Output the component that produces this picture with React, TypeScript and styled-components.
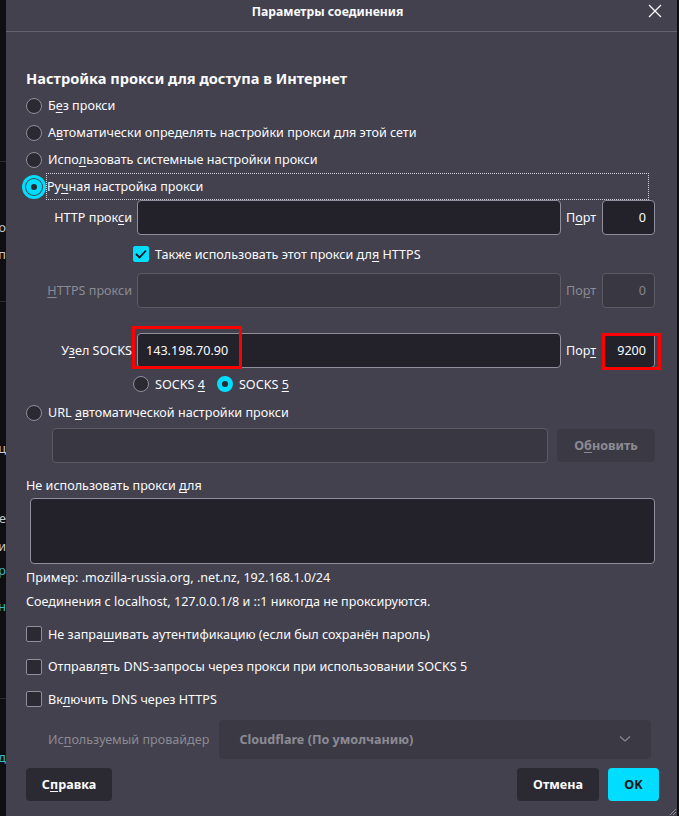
import React from "react";
import styled, { createGlobalStyle, css } from "styled-components";

const Global = createGlobalStyle`
  html, body { margin: 0; padding: 0; background: #0f0f13; }
  body { font-family: "Noto Sans", "Open Sans", sans-serif; font-size: 12.6px; color: #fbfbfe; }
  * { box-sizing: border-box; }
`;

const Root = styled.div`
  display: flex;
  width: 679px;
  height: 816px;
  overflow: hidden;
  background: #0f0f13;
`;

const Backdrop = styled.div`
  width: 6px;
  flex: none;
  position: relative;
  overflow: hidden;
`;

const Frag = styled.div<{ $top: number; $blue?: boolean }>`
  position: absolute;
  right: 0;
  top: ${(p) => p.$top}px;
  font-size: 12.6px;
  line-height: 16px;
  white-space: nowrap;
  color: ${(p) => (p.$blue ? "#3bb8c8" : "#c8c8ce")};
`;

const FragLine = styled.div<{ $top: number }>`
  position: absolute;
  left: 0;
  right: 0;
  top: ${(p) => p.$top}px;
  height: 1px;
  background: #2a2a30;
`;

const Dialog = styled.div`
  flex: 1;
  margin-right: 2px;
  background: #42414d;
  display: flex;
  flex-direction: column;
  position: relative;
`;

const TitleBar = styled.div`
  height: 32px;
  border-bottom: 1px solid #64636c;
  display: flex;
  align-items: center;
  padding-left: 6px;
  padding-right: 10px;
  flex: none;
`;

const Title = styled.div`
  flex: 1;
  text-align: center;
  font-weight: 700;
  font-size: 12.2px;
  padding-bottom: 9px;
`;

const CloseButton = styled.div`
  width: 24px;
  height: 24px;
  display: flex;
  align-items: center;
  justify-content: center;
  margin-bottom: 9px;
`;

const Content = styled.div`
  flex: 1;
  display: flex;
  flex-direction: column;
  padding: 0 22px 0 20px;
`;

const Heading = styled.div`
  margin-top: 36px;
  margin-bottom: 4px;
  font-size: 14.6px;
  font-weight: 700;
  line-height: 20px;
`;

const U = styled.span`
  text-decoration: underline;
  text-underline-offset: 2px;
`;

const RadioRow = styled.div`
  height: 27px;
  display: flex;
  align-items: center;
  gap: 6px;
`;

const RadioCircle = styled.span<{ $checked?: boolean; $focus?: boolean }>`
  width: 16px;
  height: 16px;
  flex: none;
  border-radius: 50%;
  background: #2b2a33;
  border: 1px solid #8f8f9d;
  ${(p) =>
    p.$checked &&
    css`
      border: 5px solid #00ddff;
      background: #2b2a33;
    `}
  ${(p) =>
    p.$focus &&
    css`
      box-shadow: 0 0 0 1px #42414d, 0 0 0 4px #00ddff;
    `}
`;

const FocusLabel = styled.span`
  flex: 1;
  height: 25px;
  display: flex;
  align-items: center;
  margin-left: -1px;
  margin-right: 7px;
  outline: 1px dotted #d0d0d8;
`;

const ProxyRow = styled.div<{ $top?: number }>`
  display: grid;
  grid-template-columns: 106px 1fr 31px 53px;
  column-gap: 5px;
  align-items: center;
  margin-top: ${(p) => p.$top ?? 0}px;
`;

const FieldLabel = styled.span<{ $disabled?: boolean }>`
  text-align: right;
  white-space: nowrap;
  color: ${(p) => (p.$disabled ? "#8c8b94" : "#fbfbfe")};
`;

const PortLabel = styled.span<{ $disabled?: boolean }>`
  color: ${(p) => (p.$disabled ? "#8c8b94" : "#fbfbfe")};
`;

const InputBox = styled.div<{ $disabled?: boolean; $right?: boolean; $h?: number }>`
  position: relative;
  height: ${(p) => p.$h ?? 35}px;
  border-radius: 4px;
  border: 1px solid ${(p) => (p.$disabled ? "#5c5b64" : "#8f8f9d")};
  background: ${(p) => (p.$disabled ? "#393842" : "#23222b")};
  color: ${(p) => (p.$disabled ? "#85848d" : "#fbfbfe")};
  display: flex;
  align-items: center;
  justify-content: ${(p) => (p.$right ? "flex-end" : "flex-start")};
  padding: 0 8px;
`;

const Highlight = styled.div<{ $l: number; $t: number; $w: number; $h: number }>`
  position: absolute;
  left: ${(p) => p.$l}px;
  top: ${(p) => p.$t}px;
  width: ${(p) => p.$w}px;
  height: ${(p) => p.$h}px;
  border: 3px solid #ff0000;
  pointer-events: none;
`;

const CheckRow = styled.div<{ $indent?: number; $h?: number }>`
  height: ${(p) => p.$h ?? 32.5}px;
  display: flex;
  align-items: center;
  gap: 6px;
  padding-left: ${(p) => p.$indent ?? 0}px;
`;

const CheckBox = styled.span<{ $checked?: boolean }>`
  width: 16px;
  height: 16px;
  flex: none;
  border-radius: 2px;
  display: flex;
  align-items: center;
  justify-content: center;
  background: ${(p) => (p.$checked ? "#00ddff" : "#2b2a33")};
  border: 1px solid ${(p) => (p.$checked ? "#00ddff" : "#8f8f9d")};
`;

const SocksRadios = styled.div`
  height: 30px;
  margin-top: 1px;
  display: flex;
  align-items: center;
  padding-left: 107px;
  gap: 12px;
`;

const SocksOption = styled.span`
  display: flex;
  align-items: center;
  gap: 6px;
`;

const UrlRow = styled.div`
  display: flex;
  align-items: center;
  gap: 9px;
  margin-top: 2px;
  padding-left: 26px;
`;

const Grow = styled.div`
  flex: 1;
`;

const GhostButton = styled.div`
  width: 98px;
  height: 33px;
  border-radius: 4px;
  background: #3b3a44;
  color: #8c8b94;
  font-weight: 700;
  display: flex;
  align-items: center;
  justify-content: center;
`;

const SectionLabel = styled.div`
  margin-top: 13px;
  line-height: 20px;
  margin-bottom: 2px;
`;

const TextArea = styled.div`
  margin-left: 4px;
  height: 66px;
  border-radius: 4px;
  border: 1px solid #8f8f9d;
  background: #23222b;
`;

const Note = styled.div<{ $top?: number }>`
  line-height: 24px;
  margin-top: ${(p) => p.$top ?? 0}px;
`;

const ChecksBlock = styled.div`
  margin-top: 4px;
  display: flex;
  flex-direction: column;
`;

const ProviderRow = styled.div`
  margin-top: 4px;
  display: flex;
  align-items: center;
  gap: 10px;
  padding-left: 22px;
  padding-right: 4px;
`;

const ProviderLabel = styled.span`
  color: #8c8b94;
`;

const Select = styled.div`
  flex: 1;
  height: 39px;
  border-radius: 4px;
  background: #3b3a44;
  color: #8c8b94;
  font-weight: 700;
  display: flex;
  align-items: center;
  justify-content: space-between;
  padding: 0 20px 0 20px;
`;

const Footer = styled.div`
  margin-top: 9px;
  margin-right: -4px;
  display: flex;
  align-items: center;
  gap: 9px;
`;

const Button = styled.div<{ $primary?: boolean; $w: number }>`
  width: ${(p) => p.$w}px;
  height: 33px;
  border-radius: 4px;
  font-weight: 700;
  display: flex;
  align-items: center;
  justify-content: center;
  background: ${(p) => (p.$primary ? "#00ddff" : "#2b2a33")};
  color: ${(p) => (p.$primary ? "#15141a" : "#fbfbfe")};
`;

const Grip = styled.svg`
  position: absolute;
  right: 0;
  bottom: 0;
`;

const Check = () => (
  <svg width="12" height="10" viewBox="0 0 12 10">
    <path d="M1 5 L4.5 8.5 L11 1.5" stroke="#15141a" strokeWidth="1.8" fill="none" />
  </svg>
);

export default function App() {
  return (
    <>
      <Global />
      <Root>
        <Backdrop>
          <FragLine $top={161} />
          <Frag $top={220}>о</Frag>
          <Frag $top={247}>п</Frag>
          <FragLine $top={301} />
          <Frag $top={441}>ац</Frag>
          <Frag $top={511}>е</Frag>
          <Frag $top={539}>и</Frag>
          <Frag $top={563} $blue>р</Frag>
          <Frag $top={599} $blue>н</Frag>
          <FragLine $top={698} />
          <Frag $top={750} $blue>д</Frag>
        </Backdrop>
        <Dialog>
          <TitleBar>
            <Title>Параметры соединения</Title>
            <CloseButton>
              <svg width="14" height="14" viewBox="0 0 14 14">
                <path d="M1 1 L13 13 M13 1 L1 13" stroke="#fbfbfe" strokeWidth="1.3" />
              </svg>
            </CloseButton>
          </TitleBar>
          <Content>
            <Heading>Настройка прокси для доступа в Интернет</Heading>
            <RadioRow>
              <RadioCircle />
              <span>
                Б<U>е</U>з прокси
              </span>
            </RadioRow>
            <RadioRow>
              <RadioCircle />
              <span>
                А<U>в</U>томатически определять настройки прокси для этой сети
              </span>
            </RadioRow>
            <RadioRow>
              <RadioCircle />
              <span>
                Испо<U>л</U>ьзовать системные настройки прокси
              </span>
            </RadioRow>
            <RadioRow>
              <RadioCircle $checked $focus />
              <FocusLabel>
                Ру<U>ч</U>ная настройка прокси
              </FocusLabel>
            </RadioRow>

            <ProxyRow>
              <FieldLabel>
                HTTP прок<U>с</U>и
              </FieldLabel>
              <InputBox />
              <PortLabel>
                П<U>о</U>рт
              </PortLabel>
              <InputBox $right>0</InputBox>
            </ProxyRow>
            <CheckRow $indent={107} $h={38}>
              <CheckBox $checked>
                <Check />
              </CheckBox>
              <span>
                Также использовать этот прокси дл<U>я</U> HTTPS
              </span>
            </CheckRow>
            <ProxyRow>
              <FieldLabel $disabled>
                <U>H</U>TTPS прокси
              </FieldLabel>
              <InputBox $disabled />
              <PortLabel $disabled>
                По<U>р</U>т
              </PortLabel>
              <InputBox $disabled $right>
                0
              </InputBox>
            </ProxyRow>
            <ProxyRow $top={25}>
              <FieldLabel>
                У<U>з</U>ел SOCKS
              </FieldLabel>
              <InputBox>
                143.198.70.90
                <Highlight $l={-6} $t={-8} $w={110} $h={43} />
              </InputBox>
              <PortLabel>
                Пор<U>т</U>
              </PortLabel>
              <InputBox $right>
                9200
                <Highlight $l={-1} $t={-1} $w={59} $h={37} />
              </InputBox>
            </ProxyRow>
            <SocksRadios>
              <SocksOption>
                <RadioCircle />
                <span>
                  SOCKS <U>4</U>
                </span>
              </SocksOption>
              <SocksOption>
                <RadioCircle $checked />
                <span>
                  SOCKS <U>5</U>
                </span>
              </SocksOption>
            </SocksRadios>
            <RadioRow>
              <RadioCircle />
              <span>
                URL <U>а</U>втоматической настройки прокси
              </span>
            </RadioRow>
            <UrlRow>
              <Grow>
                <InputBox $disabled />
              </Grow>
              <GhostButton>
                <span>
                  О<U>б</U>новить
                </span>
              </GhostButton>
            </UrlRow>

            <SectionLabel>
              Не использовать прокси <U>д</U>ля
            </SectionLabel>
            <TextArea />
            <Note $top={2}>Пример: .mozilla-russia.org, .net.nz, 192.168.1.0/24</Note>
            <Note>Соединения с localhost, 127.0.0.1/8 и ::1 никогда не проксируются.</Note>

            <ChecksBlock>
              <CheckRow>
                <CheckBox />
                <span>
                  Не запра<U>ш</U>ивать аутентификацию (если был сохранён пароль)
                </span>
              </CheckRow>
              <CheckRow>
                <CheckBox />
                <span>
                  Отправл<U>я</U>ть DNS-запросы через прокси при использовании SOCKS 5
                </span>
              </CheckRow>
              <CheckRow>
                <CheckBox />
                <span>
                  Вк<U>л</U>ючить DNS через HTTPS
                </span>
              </CheckRow>
            </ChecksBlock>

            <ProviderRow>
              <ProviderLabel>
                Ис<U>п</U>ользуемый провайдер
              </ProviderLabel>
              <Select>
                <span>Cloudflare (По умолчанию)</span>
                <svg width="12" height="8" viewBox="0 0 12 8">
                  <path d="M1 1.5 L6 6 L11 1.5" stroke="#8c8b94" strokeWidth="1.2" fill="none" />
                </svg>
              </Select>
            </ProviderRow>

            <Footer>
              <Button $w={86}>
                <span>
                  С<U>п</U>равка
                </span>
              </Button>
              <Grow />
              <Button $w={82}>Отмена</Button>
              <Button $w={51} $primary>
                OK
              </Button>
            </Footer>
          </Content>
          <Grip width="9" height="9" viewBox="0 0 9 9">
            <path d="M8 2 L2 8 M8 5 L5 8 M8 8 L8 8" stroke="#8f8f9d" strokeWidth="1" />
          </Grip>
        </Dialog>
      </Root>
    </>
  );
}
